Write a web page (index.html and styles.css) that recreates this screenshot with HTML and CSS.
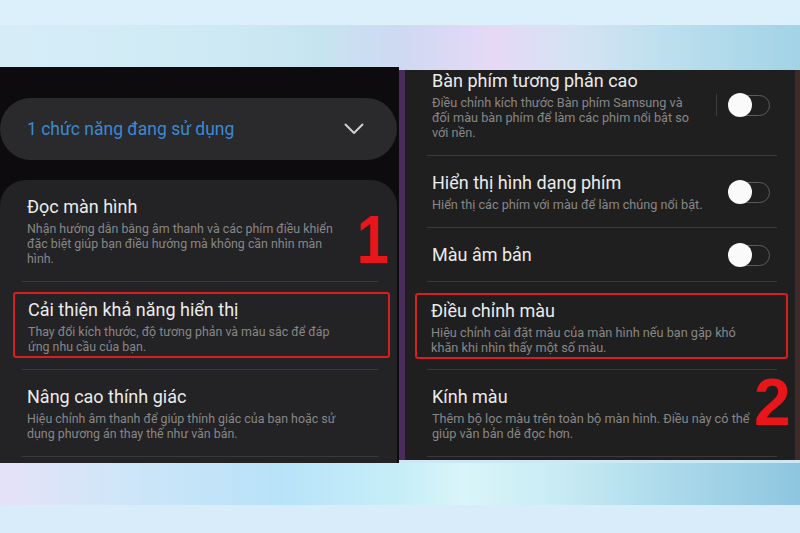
FILE: index.html
```html
<!DOCTYPE html>
<html lang="vi">
<head>
<meta charset="utf-8">
<title>Cài đặt hỗ trợ</title>
<link rel="stylesheet" href="styles.css">
</head>
<body>
<div class="top-strip"></div>
<div class="stage">
  <div class="shot shot-left">
    <div class="pill">
      <span class="pill-text">1 chức năng đang sử dụng</span>
      <svg class="chevron" width="20" height="12" viewBox="0 0 20 12"><path d="M1.5 1.5 L10 10 L18.5 1.5" fill="none" stroke="#cfcfcf" stroke-width="2" stroke-linecap="round" stroke-linejoin="round"/></svg>
    </div>
    <div class="card">
      <div class="list">
        <div class="item">
          <div class="text">
            <div class="title">Đọc màn hình</div>
            <div class="desc">Nhận hướng dẫn bằng âm thanh và các phím điều khiển<br>đặc biệt giúp bạn điều hướng mà không cần nhìn màn<br>hình.</div>
          </div>
        </div>
        <div class="divider"></div>
        <div class="item box box-left">
          <div class="text">
            <div class="title">Cải thiện khả năng hiển thị</div>
            <div class="desc">Thay đổi kích thước, độ tương phản và màu sắc để đáp<br>ứng nhu cầu của bạn.</div>
          </div>
        </div>
        <div class="divider"></div>
        <div class="item">
          <div class="text">
            <div class="title">Nâng cao thính giác</div>
            <div class="desc">Hiệu chỉnh âm thanh để giúp thính giác của bạn hoặc sử<br>dụng phương án thay thế như văn bản.</div>
          </div>
        </div>
        <div class="divider"></div>
      </div>
      <span class="mark mark-1">1</span>
    </div>
  </div>
  <div class="shot shot-right">
    <div class="list list-right">
      <div class="item item-first">
        <div class="text">
          <div class="title">Bàn phím tương phản cao</div>
          <div class="desc">Điều chỉnh kích thước Bàn phím Samsung và<br>đối màu bàn phím để làm các phim nổi bật so<br>với nền.</div>
        </div>
        <span class="vsep"></span>
        <span class="toggle"><span class="knob"></span></span>
      </div>
      <div class="divider"></div>
      <div class="item">
        <div class="text">
          <div class="title">Hiển thị hình dạng phím</div>
          <div class="desc">Hiển thị các phím với màu để làm chúng nổi bật.</div>
        </div>
        <span class="toggle"><span class="knob"></span></span>
      </div>
      <div class="divider"></div>
      <div class="item">
        <div class="text">
          <div class="title">Màu âm bản</div>
        </div>
        <span class="toggle"><span class="knob"></span></span>
      </div>
      <div class="divider"></div>
      <div class="item box box-right">
        <div class="text">
          <div class="title">Điều chỉnh màu</div>
          <div class="desc">Hiệu chỉnh cài đặt màu của màn hình nếu bạn gặp khó<br>khăn khi nhìn thấy một số màu.</div>
        </div>
      </div>
      <div class="divider"></div>
      <div class="item">
        <div class="text">
          <div class="title">Kính màu</div>
          <div class="desc">Thêm bộ lọc màu trên toàn bộ màn hình. Điều này có thể<br>giúp văn bản dễ đọc hơn.</div>
        </div>
      </div>
      <div class="divider"></div>
    </div>
    <span class="mark mark-2">2</span>
    <span class="scrollbar"></span>
  </div>
</div>
<div class="bottom-strip"></div>
</body>
</html>
```

FILE: styles.css
```css
html, body {
  margin: 0;
  padding: 0;
}
body {
  width: 800px;
  height: 533px;
  overflow: hidden;
  background: #d9edfb;
  font-family: Roboto, "Noto Sans", "Liberation Sans", sans-serif;
}
.top-strip {
  height: 25px;
  background: #dcf0fc;
}
.bottom-strip {
  height: 28px;
  background: #d8ecfa;
}
.stage {
  height: 480px;
  display: flex;
  align-items: flex-start;
  background:
    linear-gradient(90deg, #d6edf8 0%, #cfeaf4 25%, #c6e4f0 40%, #cfd9f2 50%, #e6d9f6 62%, #d4e3f4 72%, #bfe0ee 82%, #a2d3e6 100%) top / 100% 45px no-repeat,
    linear-gradient(90deg, #e6e2f8 0%, #cfe6f8 15%, #b8e2f8 35%, #c6eef8 50%, #d9f5f9 58%, #c8ebf4 70%, #a9d8ea 85%, #8ec6df 100%) bottom / 100% 42px no-repeat,
    #cde8f4;
}
.shot {
  position: relative;
  overflow: hidden;
  display: flex;
  flex-direction: column;
}
.shot-left {
  width: 399px;
  height: 396px;
  margin-top: 42px;
  background: #0d0b0e;
}
.shot-right {
  width: 390px;
  height: 390px;
  margin-top: 45px;
  background: #1f1f1f;
  border-left: 6px solid #4a2c5c;
  border-right: 5px solid #3f2a2a;
}
.pill {
  margin-top: 31px;
  width: 397px;
  height: 62px;
  box-sizing: border-box;
  border-radius: 31px;
  background: #2a292b;
  display: flex;
  align-items: center;
  justify-content: space-between;
  padding: 0 33px 0 27px;
}
.pill-text {
  color: #3b8ad4;
  font-size: 17.5px;
}
.card {
  position: relative;
  margin-top: 20px;
  width: 397px;
  flex: 1;
  background: #232224;
  border-radius: 26px 26px 0 0;
}
.list {
  padding: 0 19px 0 22px;
  display: flex;
  flex-direction: column;
}
.list-right {
  padding: 0 18px 0 22px;
}
.item {
  display: flex;
  align-items: center;
  padding: 16px 0 15px 5px;
}
.item-first {
  padding-top: 0;
}
.text {
  flex: 1;
}
.title {
  color: #ebebeb;
  font-size: 18px;
  line-height: 22px;
  white-space: nowrap;
}
.desc {
  margin-top: 3px;
  color: #878787;
  font-size: 12.4px;
  line-height: 15px;
  white-space: nowrap;
}
.list-right .desc {
  font-size: 12.7px;
}
.divider {
  height: 1px;
  background: #3a393b;
}
.box {
  border: 2px solid #d81e1e;
  border-radius: 3px;
  padding: 5px 0 2px 13px;
  margin: 10px -12px 11px -9px;
}
.box-right {
  margin: 11px -11px 10px -12px;
  padding-left: 14px;
}
.toggle {
  position: relative;
  width: 39px;
  height: 19px;
  border: 1.5px solid #5c5c5c;
  border-radius: 11px;
  margin-right: 7px;
}
.knob {
  position: absolute;
  left: -2px;
  top: -3px;
  width: 24px;
  height: 24px;
  border-radius: 50%;
  background: #fafafa;
}
.vsep {
  width: 1px;
  height: 22px;
  background: #3c3c3c;
  margin-right: 12px;
}
.mark {
  position: absolute;
  color: #e8161a;
  font-family: "Liberation Sans", Arial, sans-serif;
  font-weight: 700;
  line-height: 1;
}
.mark-1 {
  font-size: 68px;
  left: 354px;
  top: 25px;
  transform: scaleX(0.85);
}
.mark-2 {
  font-size: 66px;
  left: 349px;
  top: 299px;
}
.scrollbar {
  position: absolute;
  right: -5px;
  top: 258px;
  width: 5px;
  height: 132px;
  background: #8e8686;
}
```
